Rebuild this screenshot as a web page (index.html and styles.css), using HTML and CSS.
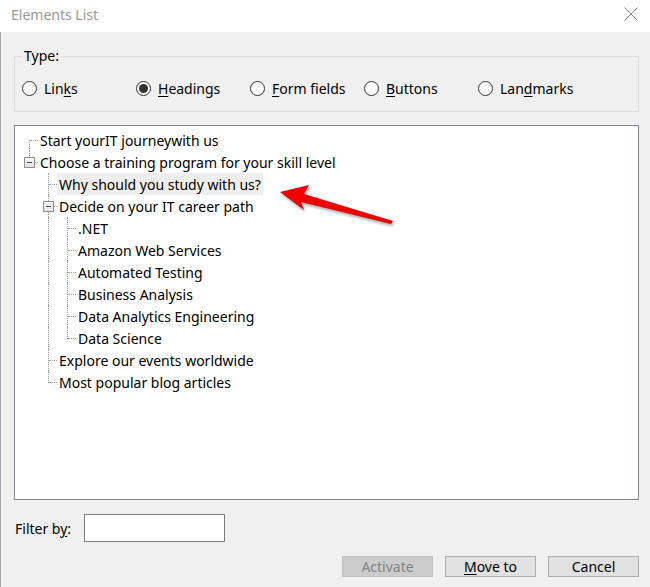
FILE: index.html
```html
<!DOCTYPE html>
<html>
<head>
<meta charset="utf-8">
<link rel="stylesheet" href="styles.css">
</head>
<body>
<div class="dialog">
  <div class="titlebar">
    <span class="title">Elements List</span>
    <svg class="close" width="14" height="14" viewBox="0 0 14 14"><path d="M0.5 0.5 L13.5 13.5 M13.5 0.5 L0.5 13.5" stroke="#8a8a8a" stroke-width="1" fill="none"/></svg>
  </div>
  <div class="body">
    <fieldset class="group">
      <legend class="legend">Type:</legend>
      <div class="radios">
        <label class="radio"><span class="circle"></span><span>Lin<u>k</u>s</span></label>
        <label class="radio"><span class="circle on"></span><span><u>H</u>eadings</span></label>
        <label class="radio"><span class="circle"></span><span><u>F</u>orm fields</span></label>
        <label class="radio"><span class="circle"></span><span><u>B</u>uttons</span></label>
        <label class="radio"><span class="circle"></span><span>Lan<u>d</u>marks</span></label>
      </div>
    </fieldset>

    <div class="tree">
      <div class="row"><span class="cell first"></span><span class="text">Start yourIT journeywith us</span></div>
      <div class="row"><span class="cell box-last"><span class="box"></span></span><span class="text">Choose a training program for your skill level</span></div>
      <div class="row"><span class="cell"></span><span class="cell tee"></span><span class="text hl">Why should you study with us?</span></div>
      <div class="row"><span class="cell"></span><span class="cell box-tee"><span class="box"></span></span><span class="text">Decide on your IT career path</span></div>
      <div class="row"><span class="cell"></span><span class="cell pipe"></span><span class="cell tee start"></span><span class="text">.NET</span></div>
      <div class="row"><span class="cell"></span><span class="cell pipe"></span><span class="cell tee"></span><span class="text">Amazon Web Services</span></div>
      <div class="row"><span class="cell"></span><span class="cell pipe"></span><span class="cell tee"></span><span class="text">Automated Testing</span></div>
      <div class="row"><span class="cell"></span><span class="cell pipe"></span><span class="cell tee"></span><span class="text">Business Analysis</span></div>
      <div class="row"><span class="cell"></span><span class="cell pipe"></span><span class="cell tee"></span><span class="text">Data Analytics Engineering</span></div>
      <div class="row"><span class="cell"></span><span class="cell pipe"></span><span class="cell elbow"></span><span class="text">Data Science</span></div>
      <div class="row"><span class="cell"></span><span class="cell tee"></span><span class="text">Explore our events worldwide</span></div>
      <div class="row"><span class="cell"></span><span class="cell elbow"></span><span class="text">Most popular blog articles</span></div>
      <svg class="arrow" width="130" height="50" viewBox="0 0 130 50">
        <polygon points="0,12 29,5 24,14 113,41 111,44 21,22 24,30" fill="#f20000"/>
      </svg>
    </div>

    <div class="filter">
      <label class="filter-label">Filter b<u>y</u>:</label>
      <span class="input"></span>
    </div>

    <div class="buttons">
      <span class="btn disabled">Activate</span>
      <span class="btn"><u>M</u>ove to</span>
      <span class="btn">Cancel</span>
    </div>
  </div>
</div>
</body>
</html>
```

FILE: styles.css
```css
html, body {
  margin: 0;
  padding: 0;
}
body {
  width: 650px;
  height: 587px;
  overflow: hidden;
  background: #f0f0f0;
  font-family: "Noto Sans", "Open Sans", sans-serif;
  font-size: 14px;
  color: #000;
}
.dialog {
  display: flex;
  flex-direction: column;
  height: 587px;
}
.titlebar {
  height: 32px;
  background: #fff;
  display: flex;
  align-items: center;
  justify-content: space-between;
  padding: 0 12px 0 11px;
  flex-shrink: 0;
}
.title {
  color: #9a9a9a;
  font-size: 14px;
  margin-top: -3px;
}
.close {
  margin-top: -4px;
}
.body {
  flex: 1;
  border-left: 1px solid #a8a8a8;
  padding: 0 11px 0 13px;
}
.group {
  margin: 14px 0 0 0;
  padding: 0 0 0 7px;
  border: 1px solid #dcdcdc;
  height: 66px;
  box-sizing: border-box;
  min-width: 0;
}
.legend {
  padding: 0 2px;
  margin-left: 0;
  line-height: 20px;
}
.radios {
  display: grid;
  grid-template-columns: repeat(5, 114px);
  margin-top: 12px;
}
.radio {
  display: flex;
  align-items: center;
  gap: 7px;
  height: 20px;
}
.circle {
  width: 13px;
  height: 13px;
  border: 1px solid #333;
  border-radius: 50%;
  background: #fff;
  box-sizing: content-box;
  display: flex;
  align-items: center;
  justify-content: center;
}
.circle.on::after {
  content: "";
  width: 9px;
  height: 9px;
  border-radius: 50%;
  background: #333;
}
u {
  text-decoration-thickness: 1px;
  text-underline-offset: 2px;
}
.tree {
  position: relative;
  margin-top: 13px;
  height: 375px;
  box-sizing: border-box;
  border: 1px solid #828790;
  background: #fff;
  padding: 3px 0 0 4px;
}
.row {
  display: flex;
  height: 22px;
  align-items: stretch;
}
.cell {
  position: relative;
  width: 19px;
  flex-shrink: 0;
}
.cell.pipe::before,
.cell.tee::before,
.cell.elbow::before,
.cell.first::before,
.cell.box-last::before,
.cell.box-tee::before {
  content: "";
  position: absolute;
  left: 10px;
  top: 0;
  bottom: 0;
  border-left: 1px dotted #a0a0a0;
}
.cell.elbow::before {
  bottom: 10px;
}
.cell.first::before {
  top: 11px;
}
.cell.box-last::before {
  bottom: 11px;
}
.cell.tee::after,
.cell.elbow::after,
.cell.first::after,
.cell.box-last::after,
.cell.box-tee::after {
  content: "";
  position: absolute;
  left: 11px;
  width: 8px;
  top: 11px;
  border-top: 1px dotted #a0a0a0;
}
.box {
  position: absolute;
  left: 5px;
  top: 6px;
  width: 9px;
  height: 9px;
  border: 1px solid #919191;
  background: linear-gradient(#fafafa, #e2e2e2);
  z-index: 1;
}
.box::after {
  content: "";
  position: absolute;
  left: 2px;
  top: 4px;
  width: 5px;
  height: 1px;
  background: #3c4a66;
}
.text {
  display: flex;
  align-items: center;
  padding: 0 2px;
  white-space: nowrap;
}
.text.hl {
  background: #efefef;
}
.arrow {
  position: absolute;
  left: 265px;
  top: 54px;
  filter: drop-shadow(1px 2px 1.5px rgba(0,0,0,0.35));
}
.filter {
  display: flex;
  align-items: center;
  margin-top: 14px;
  height: 28px;
}
.filter-label {
  width: 69px;
  padding-left: 1px;
}
.input {
  width: 139px;
  height: 26px;
  border: 1px solid #7a7a7a;
  background: #fff;
}
.buttons {
  display: flex;
  justify-content: flex-end;
  gap: 12px;
  margin-top: 14px;
}
.btn {
  width: 89px;
  height: 19px;
  border: 1px solid #adadad;
  background: #e1e1e1;
  display: flex;
  align-items: center;
  justify-content: center;
  line-height: 19px;
}
.btn.disabled {
  background: #cccccc;
  border-color: #bfbfbf;
  color: #838383;
}
```
